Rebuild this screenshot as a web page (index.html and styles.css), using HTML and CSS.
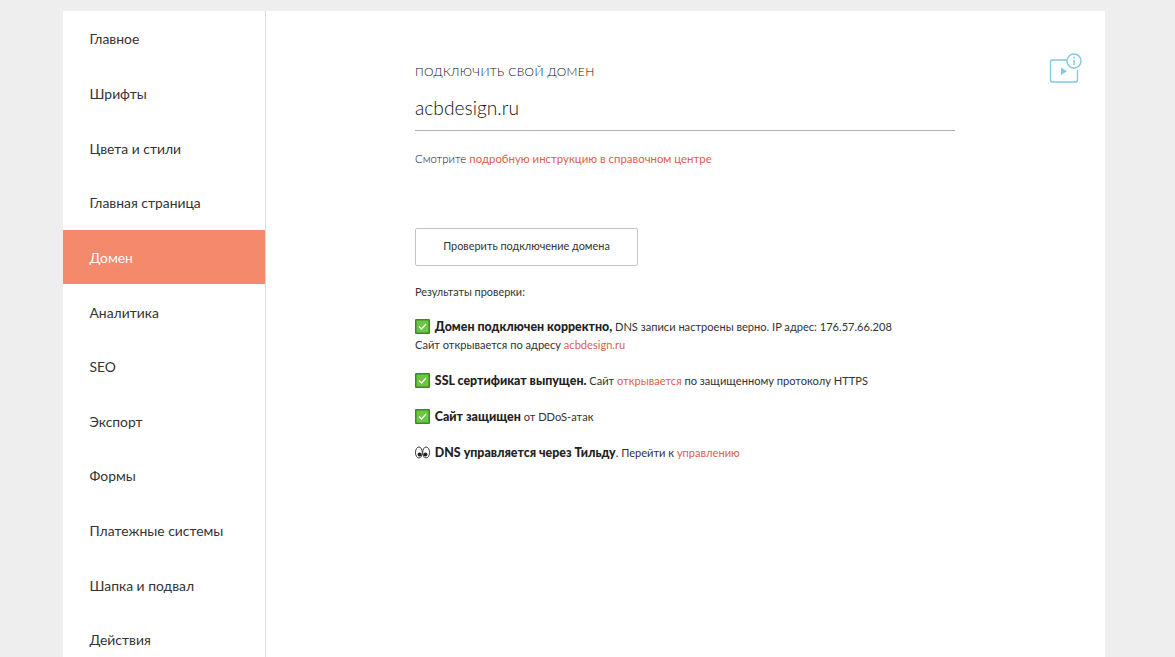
FILE: index.html
```html
<!DOCTYPE html>
<html lang="ru">
<head>
<meta charset="utf-8">
<title>Домен</title>
<link rel="stylesheet" href="styles.css">
</head>
<body>
<div class="card">
  <nav class="side">
    <a class="item">Главное</a>
    <a class="item">Шрифты</a>
    <a class="item">Цвета и стили</a>
    <a class="item">Главная страница</a>
    <a class="item active">Домен</a>
    <a class="item">Аналитика</a>
    <a class="item">SEO</a>
    <a class="item">Экспорт</a>
    <a class="item">Формы</a>
    <a class="item">Платежные системы</a>
    <a class="item">Шапка и подвал</a>
    <a class="item">Действия</a>
  </nav>
  <main class="main">
    <svg class="help" width="34" height="32" viewBox="0 0 34 32" fill="none" stroke="#7fcbdc" stroke-width="1.4">
      <path d="M18 8H3.5a2 2 0 0 0-2 2v18a2 2 0 0 0 2 2h23a2 2 0 0 0 2-2V18"/>
      <path d="M12 15.5l6 3.75-6 3.75z" fill="#7fcbdc" stroke="none"/>
      <circle cx="25" cy="9" r="7"/>
      <path d="M25 8v5M25 4.8v1.6" stroke-width="1.5"/>
    </svg>
    <h1 class="label">ПОДКЛЮЧИТЬ СВОЙ ДОМЕН</h1>
    <div class="field">acbdesign.ru</div>
    <p class="hint">Смотрите <a class="link">подробную инструкцию в справочном центре</a></p>
    <button class="btn">Проверить подключение домена</button>
    <p class="results">Результаты проверки:</p>
    <div class="row">
      <svg class="emoji" viewBox="0 0 15 15"><rect width="15" height="15" rx="1" fill="#3a8a20"/><rect x="1.5" y="1.5" width="12" height="12" fill="#6cc644"/><path d="M4 7.5l2.5 2.5L11 5" fill="none" stroke="#fff" stroke-width="1.3"/></svg>
      <b>Домен подключен корректно,</b> DNS записи настроены верно. IP адрес: 176.57.66.208<br>
      Сайт открывается по адресу <a class="link">acbdesign.ru</a>
    </div>
    <div class="row">
      <svg class="emoji" viewBox="0 0 15 15"><rect width="15" height="15" rx="1" fill="#3a8a20"/><rect x="1.5" y="1.5" width="12" height="12" fill="#6cc644"/><path d="M4 7.5l2.5 2.5L11 5" fill="none" stroke="#fff" stroke-width="1.3"/></svg>
      <b>SSL сертификат выпущен.</b> Сайт <a class="link">открывается</a> по защищенному протоколу HTTPS
    </div>
    <div class="row">
      <svg class="emoji" viewBox="0 0 15 15"><rect width="15" height="15" rx="1" fill="#3a8a20"/><rect x="1.5" y="1.5" width="12" height="12" fill="#6cc644"/><path d="M4 7.5l2.5 2.5L11 5" fill="none" stroke="#fff" stroke-width="1.3"/></svg>
      <b>Сайт защищен</b> от DDoS-атак
    </div>
    <div class="row">
      <svg class="emoji" viewBox="0 0 15 15"><ellipse cx="3.9" cy="7.5" rx="3.4" ry="5.5" fill="#fff" stroke="#333" stroke-width="1"/><ellipse cx="11.1" cy="7.5" rx="3.4" ry="5.5" fill="#fff" stroke="#333" stroke-width="1"/><circle cx="4.6" cy="9.5" r="2" fill="#222"/><circle cx="10.4" cy="9.5" r="2" fill="#222"/></svg>
      <b>DNS управляется через Тильду</b>. Перейти к <a class="link">управлению</a>
    </div>
  </main>
</div>
</body>
</html>
```
FILE: styles.css
```css
* { box-sizing: border-box; }
html, body { height: 100%; }
body {
  margin: 0;
  background: #eeeeee;
  overflow: hidden;
  font-family: "Lato", "Open Sans", "Liberation Sans", sans-serif;
  color: #222;
  padding: 11px 70px 0 63px;
}
.card {
  display: flex;
  background: #fff;
  height: 646px;
  overflow: hidden;
}
.side {
  width: 203px;
  flex: none;
  border-right: 1px solid #dcdcdc;
}
.item {
  display: flex;
  align-items: center;
  height: 54.65px;
  padding: 1px 0 0 26.5px;
  font-size: 13.9px;
  color: #333;
}
.active {
  background: #f4896b;
  color: #fff;
}
.main {
  position: relative;
  flex: 1;
  padding: 53px 0 0 149px;
}
.help {
  position: absolute;
  top: 41px;
  right: 22px;
}
.label {
  margin: 0;
  font-size: 12px;
  font-weight: 300;
  line-height: 15px;
  color: #111;
  letter-spacing: 0.35px;
}
.field {
  width: 540px;
  margin-top: 13px;
  height: 39px;
  border-bottom: 1px solid #b0b0b0;
  font-size: 19.2px;
  font-weight: 300;
  line-height: 32px;
  color: #111;
}
.hint {
  margin: 21px 0 0;
  font-size: 11.4px;
  font-weight: 300;
  line-height: 14px;
  color: #111;
}
.link { color: #e0604a; font-weight: 400; }
.btn {
  display: block;
  width: 223px;
  height: 38px;
  margin-top: 62px;
  padding: 0 0 4px;
  background: #fff;
  border: 1px solid #c4c4c4;
  border-radius: 2px;
  font: inherit;
  font-size: 10.9px;
  color: #333;
}
.results {
  margin: 18px 0 0;
  font-size: 10.9px;
  line-height: 16px;
  color: #333;
}
.row {
  margin-top: 18px;
  font-size: 11.1px;
  line-height: 18px;
  color: #333;
}
.row b { font-size: 12.4px; font-weight: 900; color: #222; }
.emoji {
  width: 15px;
  height: 15px;
  vertical-align: -3px;
  margin-right: 2px;
}
```
